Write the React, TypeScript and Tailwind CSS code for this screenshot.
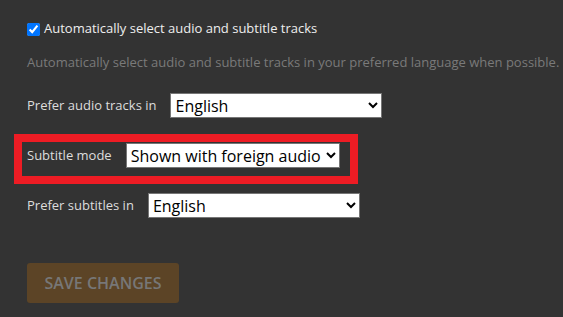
import { useState } from "react";

/* ---------------------- SMALL COMPONENTS ---------------------- */

const Row = ({
  label,
  value,
  options,
  width,
}: {
  label: string;
  value: string;
  options: string[];
  width: string;
}) => {
  const [current, setCurrent] = useState(value);
  return (
    <div className="flex items-center gap-[14px]">
      <span className="text-[13px] text-[#dddddd]">{label}</span>
      <select
        value={current}
        onChange={(e) => setCurrent(e.target.value)}
        className={`${width} h-[25px] bg-white border border-[#767676] text-black text-[16px] pl-0 leading-[20px]`}
      >
        {options.map((o) => (
          <option key={o}>{o}</option>
        ))}
      </select>
    </div>
  );
};

/* ---------------------- MAIN PAGE ---------------------- */

export default function App() {
  const [autoSelect, setAutoSelect] = useState(true);
  const languages = ["English", "Français", "Deutsch", "Español"];

  return (
    <div
      className="min-h-screen bg-[#333333] pl-[27px] pt-[20px]"
      style={{ fontFamily: '"Open Sans", "Noto Sans", sans-serif' }}
    >
      {/* Auto select */}
      <label className="flex items-center gap-[4px] h-[18px] text-[13px] text-[#eeeeee]">
        <input
          type="checkbox"
          checked={autoSelect}
          onChange={() => setAutoSelect(!autoSelect)}
          className="w-[13px] h-[13px] m-0 accent-[#0075ff]"
        />
        Automatically select audio and subtitle tracks
      </label>
      <p className="mt-[15px] h-[18px] text-[13px] leading-[18px] text-[#7a7a7a] whitespace-nowrap">
        Automatically select audio and subtitle tracks in your preferred
        language when possible.
      </p>

      {/* Audio */}
      <div className="mt-[22px]">
        <Row
          label="Prefer audio tracks in"
          value="English"
          options={languages}
          width="w-[212px]"
        />
      </div>

      {/* Subtitle mode (highlighted) */}
      <div className="mt-[16px] -ml-[13px] w-[344px] border-8 border-[#ed1c24] pl-[5px] pt-[1px] pb-[8px]">
        <Row
          label="Subtitle mode"
          value="Shown with foreign audio"
          options={[
            "Manually selected",
            "Shown with foreign audio",
            "Always enabled",
            "Disabled",
          ]}
          width="w-[214px]"
        />
      </div>

      {/* Subtitles */}
      <div className="mt-[9px]">
        <Row
          label="Prefer subtitles in"
          value="English"
          options={languages}
          width="w-[212px]"
        />
      </div>

      <button className="mt-[45px] w-[152px] h-[40px] rounded-[3px] bg-[#5c4426] text-[#777777] text-[16px] font-semibold uppercase">
        Save Changes
      </button>
    </div>
  );
}
